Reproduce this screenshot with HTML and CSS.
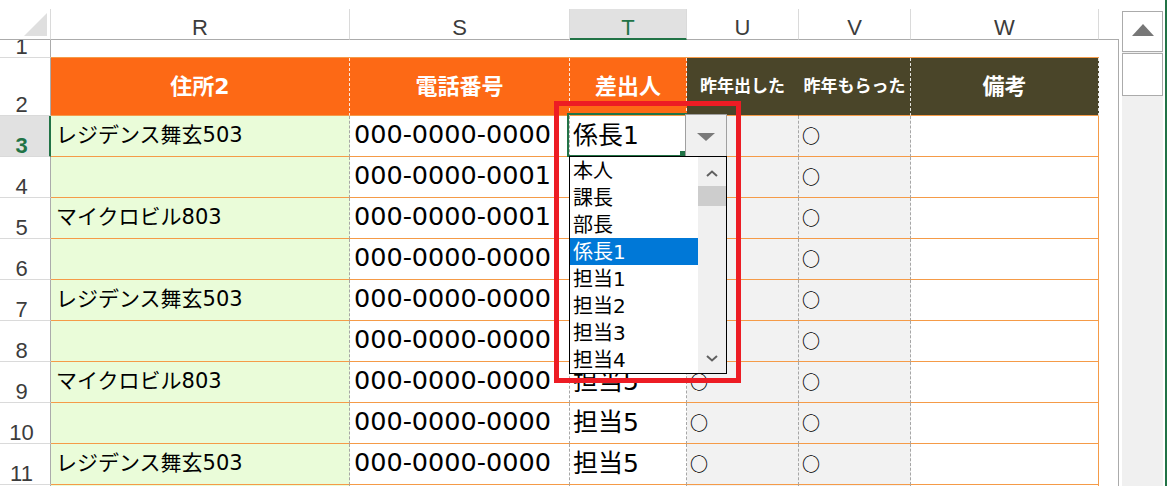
FILE: index.html
```html
<!DOCTYPE html>
<html lang="ja">
<head>
<meta charset="utf-8">
<title>Sheet</title>
<link rel="stylesheet" href="styles.css">
</head>
<body>
<div class="window">
  <div class="sheet">
    <div class="grid">
      <!-- column headers -->
      <div class="corner"><svg width="23" height="23" viewBox="0 0 23 23"><polygon points="23,0 23,23 0,23" fill="#dfdfdf"/></svg></div>
      <div class="ch">R</div>
      <div class="ch">S</div>
      <div class="ch ch-active">T</div>
      <div class="ch">U</div>
      <div class="ch">V</div>
      <div class="ch">W</div>
      <div class="ch ch-fill"></div>

      <!-- row 1 -->
      <div class="rh">1</div>
      <div class="r1"></div><div class="r1"></div><div class="r1"></div><div class="r1"></div><div class="r1"></div><div class="r1"></div>
      <div class="fill"></div>

      <!-- row 2 -->
      <div class="rh">2</div>
      <div class="h h-or">住所2</div>
      <div class="h h-or">電話番号</div>
      <div class="h h-or">差出人</div>
      <div class="h h-dk h-sm h-nosep">昨年出した</div>
      <div class="h h-dk h-sm">昨年もらった</div>
      <div class="h h-dk">備考</div>
      <div class="fill"></div>

      <!-- row 3 -->
      <div class="rh rh-active">3</div>
      <div class="c addr">レジデンス舞玄503</div>
      <div class="c tel">000-0000-0000</div>
      <div class="c who">係長1</div>
      <div class="c mark">○</div>
      <div class="c mark">○</div>
      <div class="c memo"></div>
      <div class="fill"></div>

      <!-- row 4 -->
      <div class="rh">4</div>
      <div class="c addr"></div>
      <div class="c tel">000-0000-0001</div>
      <div class="c who">担当5</div>
      <div class="c mark">○</div>
      <div class="c mark">○</div>
      <div class="c memo"></div>
      <div class="fill"></div>

      <!-- row 5 -->
      <div class="rh">5</div>
      <div class="c addr">マイクロビル803</div>
      <div class="c tel">000-0000-0001</div>
      <div class="c who">担当5</div>
      <div class="c mark">○</div>
      <div class="c mark">○</div>
      <div class="c memo"></div>
      <div class="fill"></div>

      <!-- row 6 -->
      <div class="rh">6</div>
      <div class="c addr"></div>
      <div class="c tel">000-0000-0000</div>
      <div class="c who">担当5</div>
      <div class="c mark">○</div>
      <div class="c mark">○</div>
      <div class="c memo"></div>
      <div class="fill"></div>

      <!-- row 7 -->
      <div class="rh">7</div>
      <div class="c addr">レジデンス舞玄503</div>
      <div class="c tel">000-0000-0000</div>
      <div class="c who">担当5</div>
      <div class="c mark">○</div>
      <div class="c mark">○</div>
      <div class="c memo"></div>
      <div class="fill"></div>

      <!-- row 8 -->
      <div class="rh">8</div>
      <div class="c addr"></div>
      <div class="c tel">000-0000-0000</div>
      <div class="c who">担当5</div>
      <div class="c mark">○</div>
      <div class="c mark">○</div>
      <div class="c memo"></div>
      <div class="fill"></div>

      <!-- row 9 -->
      <div class="rh">9</div>
      <div class="c addr">マイクロビル803</div>
      <div class="c tel">000-0000-0000</div>
      <div class="c who">担当5</div>
      <div class="c mark">○</div>
      <div class="c mark">○</div>
      <div class="c memo"></div>
      <div class="fill"></div>

      <!-- row 10 -->
      <div class="rh">10</div>
      <div class="c addr"></div>
      <div class="c tel">000-0000-0000</div>
      <div class="c who">担当5</div>
      <div class="c mark">○</div>
      <div class="c mark">○</div>
      <div class="c memo"></div>
      <div class="fill"></div>

      <!-- row 11 -->
      <div class="rh">11</div>
      <div class="c addr">レジデンス舞玄503</div>
      <div class="c tel">000-0000-0000</div>
      <div class="c who">担当5</div>
      <div class="c mark">○</div>
      <div class="c mark">○</div>
      <div class="c memo"></div>
      <div class="fill"></div>

      <!-- row 12 (only its top edge is visible) -->
      <div class="rh rh-empty"></div>
      <div class="c addr"></div>
      <div class="c tel"></div>
      <div class="c who"></div>
      <div class="c mark"></div>
      <div class="c mark"></div>
      <div class="c memo"></div>
      <div class="fill"></div>
    </div>
  </div>

  <div class="vscroll">
    <div class="vs-track">
      <div class="vs-btn"><svg width="22" height="12" viewBox="0 0 22 12"><polygon points="11,0 22,12 0,12" fill="#777"/></svg></div>
      <div class="vs-thumb"></div>
    </div>
  </div>
  <div class="edge"></div>

  <!-- overlays: active cell, in-cell dropdown, callout -->
  <div class="active-cell"></div>
  <div class="fill-handle"></div>
  <div class="dd-button"><svg width="18" height="8" viewBox="0 0 18 8"><polygon points="0,0 18,0 9,8" fill="#7a7a7a"/></svg></div>
  <div class="dd-list">
    <div class="dd-items">
      <div class="dd-item">本人</div>
      <div class="dd-item">課長</div>
      <div class="dd-item">部長</div>
      <div class="dd-item sel">係長1</div>
      <div class="dd-item">担当1</div>
      <div class="dd-item">担当2</div>
      <div class="dd-item">担当3</div>
      <div class="dd-item">担当4</div>
    </div>
    <div class="dd-scroll">
      <div class="dd-arrow dd-up"><svg width="12" height="7" viewBox="0 0 12 7"><polyline points="1,6 6,1.5 11,6" fill="none" stroke="#606060" stroke-width="2"/></svg></div>
      <div class="dd-thumb"></div>
      <div class="dd-space"></div>
      <div class="dd-arrow dd-down"><svg width="12" height="7" viewBox="0 0 12 7"><polyline points="1,1 6,5.5 11,1" fill="none" stroke="#606060" stroke-width="2"/></svg></div>
    </div>
  </div>
  <div class="callout"></div>
</div>
</body>
</html>
```

FILE: styles.css
```css
* { box-sizing: border-box; }

html, body {
  margin: 0;
  padding: 0;
  background: #ffffff;
}

body {
  font-family: "Liberation Sans", Arial, sans-serif;
}

.window {
  position: relative;
  width: 1167px;
  height: 486px;
  overflow: hidden;
  display: flex;
  background: #ffffff;
}

/* ---------- sheet grid ---------- */
.sheet {
  flex: none;
  width: 1119px;
  padding-top: 9px;
}

.grid {
  display: grid;
  grid-template-columns: 51px 299px 220px 117px 112px 112px 188px 20px;
  grid-template-rows: 31px 18px 58px repeat(9, 41px) 20px;
}

/* column headers */
.corner {
  display: flex;
  justify-content: flex-end;
  align-items: flex-end;
  padding: 0 3px 3px 0;
  border-right: 1px solid #dadada;
  border-bottom: 1px solid #ababab;
}
.corner svg { display: block; }

.ch {
  display: flex;
  justify-content: center;
  align-items: flex-end;
  padding-bottom: 1px;
  border-right: 1px solid #dadada;
  border-bottom: 1px solid #ababab;
  font-size: 22px;
  line-height: 20px;
  color: #3c3c3c;
}
.ch-active {
  background: #e1e1e1;
  color: #217346;
  border-bottom: 2px solid #217346;
  padding-bottom: 0;
}
.ch-fill { border-right: none; }

/* row headers */
.rh {
  display: flex;
  justify-content: center;
  align-items: flex-end;
  padding: 0 7px 0 0;
  overflow: hidden;
  border-right: 1px solid #ababab;
  border-bottom: 1px solid #dadada;
  font-size: 22px;
  line-height: 20px;
  color: #3c3c3c;
}
.rh-active {
  background: #e1e1e1;
  color: #217346;
  font-weight: bold;
  border-right: 2px solid #217346;
  padding-right: 6px;
}
.rh-empty { border-bottom: none; }

/* row 1 (mostly scrolled out) */
.r1 { border-bottom: 1px solid #f59b48; }

/* right filler column */
.fill { border-right: 1px solid #ababab; }

/* header row 2 */
.h {
  display: flex;
  justify-content: center;
  align-items: center;
  color: #ffffff;
  font-family: "DejaVu Sans", "Noto Sans CJK JP", sans-serif;
  font-weight: bold;
  font-size: 22px;
  line-height: 1;
  white-space: nowrap;
  border-bottom: 1px solid #f59b48;
  border-right: 1px dashed rgba(255, 255, 255, 0.85);
}
.h-or { background: #fd6915; }
.h-dk { background: #4a4529; }
.h-sm { font-size: 17px; }
.h-nosep { border-right-color: transparent; }

/* data cells */
.c {
  display: flex;
  align-items: center;
  padding-bottom: 2px;
  overflow: hidden;
  white-space: nowrap;
  color: #000000;
  font-family: "DejaVu Sans", "Noto Sans CJK JP", sans-serif;
  line-height: 1;
  border-bottom: 1px solid #f59b48;
  border-right: 1px dashed #a6a6a6;
}
.addr {
  background: #eafcd9;
  font-size: 21px;
  padding-left: 5px;
}
.tel {
  font-size: 25.5px;
  padding-left: 4px;
}
.who {
  font-size: 25px;
  padding-left: 3px;
}
.mark {
  background: #f2f2f2;
  font-family: "Noto Sans CJK JP", sans-serif;
  font-weight: bold;
  font-size: 18px;
  padding-left: 3px;
}
.memo {
  border-right: 1px solid #f59b48;
}

/* ---------- vertical scrollbar ---------- */
.vscroll {
  flex: none;
  width: 41px;
  margin-left: 3px;
  padding-top: 11px;
  display: flex;
  flex-direction: column;
}
.vs-track {
  flex: 1;
  background: #f0f0f0;
  display: flex;
  flex-direction: column;
  gap: 1px;
}
.vs-btn {
  height: 41px;
  background: #ffffff;
  border: 1px solid #ababab;
  display: flex;
  justify-content: center;
  align-items: center;
  padding-bottom: 3px;
}
.vs-btn svg { display: block; }
.vs-thumb {
  height: 43px;
  background: #ffffff;
  border: 1px solid #ababab;
}
.edge {
  flex: none;
  width: 2px;
  margin-left: 2px;
  background: #217346;
}

/* ---------- overlays ---------- */
.active-cell {
  position: absolute;
  left: 567px;
  top: 113px;
  width: 120px;
  height: 44px;
  border: 2px solid #217346;
}
.fill-handle {
  position: absolute;
  left: 680px;
  top: 151px;
  width: 5px;
  height: 5px;
  background: #217346;
}
.dd-button {
  position: absolute;
  left: 685px;
  top: 114px;
  width: 42px;
  height: 43px;
  background: #f0f0f0;
  border: 1px solid #a0a0a0;
  display: flex;
  justify-content: center;
  align-items: center;
  padding-top: 2px;
}
.dd-button svg { display: block; }

.dd-list {
  position: absolute;
  left: 569px;
  top: 156px;
  width: 158px;
  height: 218px;
  background: #ffffff;
  border: 1px solid #000000;
  display: flex;
  font-family: "DejaVu Sans", "Noto Sans CJK JP", sans-serif;
  font-size: 20px;
  color: #000000;
}
.dd-items {
  width: 128px;
  flex: none;
}
.dd-item {
  height: 27px;
  display: flex;
  align-items: center;
  padding-left: 3px;
  line-height: 1;
  white-space: nowrap;
}
.dd-item.sel {
  background: #0078d7;
  color: #ffffff;
}
.dd-scroll {
  flex: 1;
  background: #f0f0f0;
  display: flex;
  flex-direction: column;
}
.dd-arrow {
  height: 29px;
  display: flex;
  justify-content: center;
  align-items: center;
}
.dd-up { padding-top: 3px; }
.dd-arrow svg { display: block; }
.dd-thumb {
  height: 20px;
  background: #cdcdcd;
}
.dd-space { flex: 1; }

.callout {
  position: absolute;
  left: 554px;
  top: 101px;
  width: 187px;
  height: 282px;
  border: 5px solid #ed1c24;
}
```
